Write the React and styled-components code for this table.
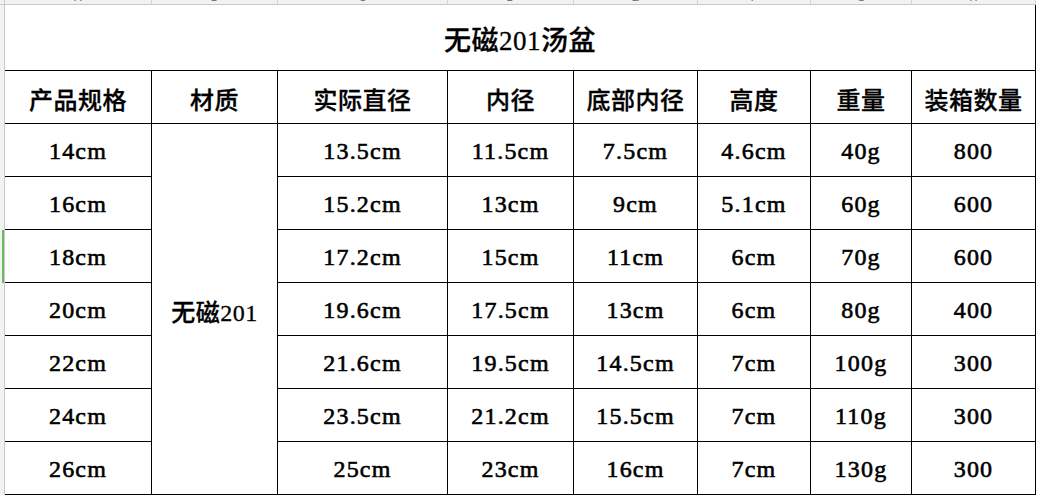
import styled, { createGlobalStyle } from 'styled-components';

const GlobalStyle = createGlobalStyle`
  html, body {
    margin: 0;
    padding: 0;
    background: #ffffff;
  }
`;

const columns = [147, 126, 170, 126, 124, 113, 101, 124];
const letters = ['A', 'B', 'C', 'D', 'E', 'F', 'G', 'H'];
const headers = ['产品规格', '材质', '实际直径', '内径', '底部内径', '高度', '重量', '装箱数量'];

const rows = [
  ['14cm', '13.5cm', '11.5cm', '7.5cm', '4.6cm', '40g', '800'],
  ['16cm', '15.2cm', '13cm', '9cm', '5.1cm', '60g', '600'],
  ['18cm', '17.2cm', '15cm', '11cm', '6cm', '70g', '600'],
  ['20cm', '19.6cm', '17.5cm', '13cm', '6cm', '80g', '400'],
  ['22cm', '21.6cm', '19.5cm', '14.5cm', '7cm', '100g', '300'],
  ['24cm', '23.5cm', '21.2cm', '15.5cm', '7cm', '110g', '300'],
  ['26cm', '25cm', '23cm', '16cm', '7cm', '130g', '300'],
];

const Sheet = styled.div`
  display: grid;
  grid-template-columns: 5px ${columns.map((w) => `${w}px`).join(' ')};
  grid-template-rows: 5px 66px 53px repeat(7, 53px);
  width: 1037px;
  font-family: "Liberation Serif", "Noto Sans CJK SC", serif;
  color: #000;
`;

const Corner = styled.div`
  box-sizing: border-box;
  background: #f2f2f2;
  border-right: 1px solid #c8c8c8;
  border-bottom: 1px solid #c8c8c8;
`;

const ColHead = styled.div`
  box-sizing: border-box;
  background: #f2f2f2;
  border-right: 1px solid #d4d4d4;
  border-bottom: 1px solid #c8c8c8;
  overflow: hidden;
  display: flex;
  justify-content: center;
  align-items: flex-end;
  span {
    font-family: "Liberation Sans", sans-serif;
    font-size: 11px;
    line-height: 14px;
    color: #666;
  }
`;

const RowHead = styled.div`
  box-sizing: border-box;
  background: #f2f2f2;
  border-right: 1px solid #c8c8c8;
  position: relative;
  &::after {
    content: '';
    display: ${(p) => (p.$active ? 'block' : 'none')};
    position: absolute;
    top: 0;
    bottom: 0;
    left: 2px;
    width: 2px;
    background: #6cb85a;
  }
`;

const Cell = styled.div`
  box-sizing: border-box;
  display: flex;
  align-items: center;
  justify-content: center;
  padding-top: 2px;
  border-right: 1px solid #000;
  border-bottom: 1px solid #000;
  font-size: ${(p) => (p.$size ? p.$size : 24)}px;
  font-weight: ${(p) => (p.$cjk ? 500 : 400)};
  letter-spacing: ${(p) => (p.$cjk ? 0.5 : 1.2)}px;
  -webkit-text-stroke: ${(p) => (p.$cjk ? 0.3 : 0.6)}px #000;
  white-space: nowrap;
  grid-column: ${(p) => p.$col || 'auto'};
  grid-row: ${(p) => p.$row || 'auto'};
`;

const App = () => {
  return (
    <>
      <GlobalStyle />
      <Sheet>
        <Corner />
        {letters.map((l) => (
          <ColHead key={l}>
            <span>{l}</span>
          </ColHead>
        ))}

        <RowHead />
        <Cell $col="span 8" $size={27} $cjk>
          无磁201汤盆
        </Cell>

        <RowHead />
        {headers.map((h) => (
          <Cell key={h} $cjk>
            {h}
          </Cell>
        ))}

        {rows.map((r, i) => (
          <Row key={r[0]} data={r} index={i} />
        ))}
      </Sheet>
    </>
  );
};

const Row = ({ data, index }) => {
  const [size, ...rest] = data;
  return (
    <>
      <RowHead $active={index === 2} />
      <Cell>{size}</Cell>
      {index === 0 && (
        <Cell $row="span 7" $cjk>
          无磁201
        </Cell>
      )}
      {rest.map((v, j) => (
        <Cell key={j}>{v}</Cell>
      ))}
    </>
  );
};

export default App;
